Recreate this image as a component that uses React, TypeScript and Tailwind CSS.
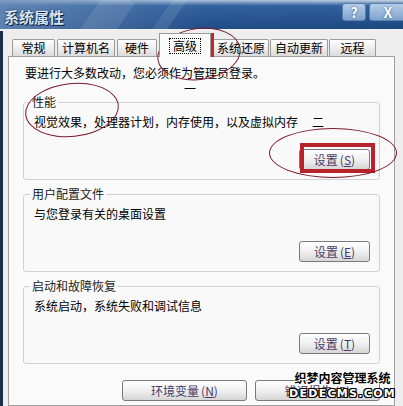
import React from "react";

const font = { fontFamily: '"Noto Sans CJK SC", "Noto Sans", sans-serif' };

function Btn({ label, k, className = "" }: { label: string; k: string; className?: string }) {
  return (
    <div
      className={
        "h-[21px] flex items-center justify-center rounded-[3px] border border-[#7a7a7a] bg-gradient-to-b from-[#ffffff] via-[#f0f0f0] to-[#d6d6d6] text-[12px] leading-none text-[#4a3b66] " +
        className
      }
    >
      {label}
      <span className="ml-[2px]">(</span>
      <u>{k}</u>
      <span>)</span>
    </div>
  );
}

function Group({ title, text, btnKey }: { title: string; text: React.ReactNode; btnKey: string }) {
  return (
    <div className="relative mx-[14px] h-[78px] rounded-[3px] border border-[#d0d0d8] bg-[#f9f9f9]">
      <div className="absolute left-[6px] top-[-9px] bg-[#fafafa] px-[2px] text-[12px] leading-[16px] text-[#222]">{title}</div>
      <div className="pl-[10px] pt-[11px] text-[12px] leading-[16px] text-black">{text}</div>
      <div className="flex justify-end pr-[9px] pt-[19px]">
        <Btn label="设置" k={btnKey} className="w-[71px]" />
      </div>
    </div>
  );
}

const tabCls =
  "h-[17px] flex items-center justify-center border border-b-0 border-[#9a9a9a] rounded-t-[2px] bg-gradient-to-b from-[#ffffff] to-[#dcdcdc] text-[12px] leading-none text-black";

export default function App() {
  return (
    <div className="relative w-[403px] h-[406px] overflow-hidden bg-[#eeeeee]" style={font}>
      {/* Title bar */}
      <div className="relative h-[31px] bg-[#f0f0f0]">
        <div className="relative h-[29px] bg-gradient-to-b from-[#c9d6e6] via-[#2f5f9c] via-[20%] to-[#1c4780] flex items-center overflow-hidden">
          <div className="absolute inset-0 bg-gradient-to-r from-[#6d8fba]/80 via-[#3a6aa6]/20 to-transparent" />
          <div className="absolute left-[90px] top-[-10px] w-[30px] h-[60px] bg-white/10 rotate-[35deg]" />
          <div className="absolute left-[160px] top-[-10px] w-[12px] h-[60px] bg-white/10 rotate-[35deg]" />
          <span className="relative pl-[4px] pt-[5px] text-[15px] font-bold text-[#d8e4f3] [text-shadow:1px_1px_0_#0a1f3d,0_0_2px_#0a1f3d]">系统属性</span>
          <div className="absolute right-[37px] top-[3px] w-[24px] h-[18px] rounded-[3px] bg-gradient-to-b from-[#b6cde8] to-[#7ea3cd] border border-[#5a7fac] flex items-center justify-center text-white font-bold text-[14px] leading-none [text-shadow:0_0_2px_#2a4a78]">?</div>
          <div className="absolute right-[-4px] top-[3px] w-[38px] h-[18px] rounded-[3px] bg-gradient-to-b from-[#b6cde8] to-[#7ea3cd] border border-[#5a7fac] flex items-center justify-center text-white font-bold text-[14px] leading-none [text-shadow:0_0_2px_#2a4a78]">X</div>
        </div>
      </div>

      {/* Body */}
      <div className="flex h-[375px]">
        <div className="w-[3px] bg-[#1c2d4a]" />
        <div className="flex-1 flex flex-col">
          {/* Tabs */}
          <div className="flex items-end h-[25px] pl-[9px]">
            <div className={tabCls + " w-[43px] mr-[2px]"}>常规</div>
            <div className={tabCls + " w-[58px] mr-[2px]"}>计算机名</div>
            <div className={tabCls + " w-[40px] mr-[2px]"}>硬件</div>
            <div className="relative h-[24px] w-[52px] mr-[2px] flex items-center justify-center border border-b-0 border-[#9a9a9a] bg-[#fafafa] text-[12px] leading-none text-black z-10 -mb-px">
              <span className="border border-dotted border-black px-[3px] py-[1px]">高级</span>
            </div>
            <div className={tabCls + " w-[56px] mr-[1px]"}>系统还原</div>
            <div className={tabCls + " w-[58px] mr-[1px]"}>自动更新</div>
            <div className={tabCls + " w-[47px]"}>远程</div>
          </div>
          {/* Panel */}
          <div className="ml-[5px] w-[387px] flex-1 border border-[#a0a0a0] bg-[#fafafa] flex flex-col">
            <div className="pl-[16px] pt-[8px] text-[12px] leading-[16px] text-black">要进行大多数改动，您必须作为管理员登录。</div>
            <div className="pl-[175px] pt-[2px] text-[12px] leading-[12px] text-black">一</div>
            <div className="h-[7px]" />
            <Group
              title="性能"
              text={<span>视觉效果，处理器计划，内存使用，以及虚拟内存<span className="ml-[14px]">二</span></span>}
              btnKey="S"
            />
            <div className="h-[14px]" />
            <Group title="用户配置文件" text="与您登录有关的桌面设置" btnKey="E" />
            <div className="h-[14px]" />
            <Group title="启动和故障恢复" text="系统启动，系统失败和调试信息" btnKey="T" />
            <div className="flex pl-[113px] pt-[16px] gap-[8px]">
              <Btn label="环境变量" k="N" className="w-[125px]" />
              <Btn label="错误报告" k="R" className="w-[125px]" />
            </div>
          </div>
        </div>
      </div>

      {/* Annotations */}
      <div className="absolute left-[161px] top-[33px] w-[53px] h-[24px] border-[4px] border-[#c3262b] pointer-events-none" />
      <div className="absolute left-[300px] top-[143px] w-[75px] h-[30px] border-[4px] border-[#b8222a] pointer-events-none" />
      <div className="absolute left-[157px] top-[28px] w-[84px] h-[52px] rounded-[50%] border border-[#7a1a2a] -rotate-[8deg] pointer-events-none" />
      <div className="absolute left-[25px] top-[83px] w-[94px] h-[54px] rounded-[50%] border border-[#7a1a2a] -rotate-[6deg] pointer-events-none" />
      <div className="absolute left-[269px] top-[128px] w-[128px] h-[50px] rounded-[50%] border border-[#7a1a2a] pointer-events-none" />

      {/* Watermark */}
      <div className="absolute left-[294px] top-[371px] w-[97px] flex flex-col items-center pointer-events-none">
        <span className="text-[12px] leading-[14px] font-bold text-black [text-shadow:1px_0_0_#fff,-1px_0_0_#fff,0_1px_0_#fff,0_-1px_0_#fff,1px_1px_0_#fff,-1px_-1px_0_#fff]">织梦内容管理系统</span>
        <span className="mt-[3px] text-[11px] leading-[11px] font-bold tracking-[1.3px] text-white [text-shadow:1px_0_0_#000,-1px_0_0_#000,0_1px_0_#000,0_-1px_0_#000,1px_1px_0_#000,-1px_-1px_0_#000,1px_-1px_0_#000,-1px_1px_0_#000]" style={{ fontFamily: '"DejaVu Sans", sans-serif' }}>DEDECMS.COM</span>
      </div>
    </div>
  );
}
